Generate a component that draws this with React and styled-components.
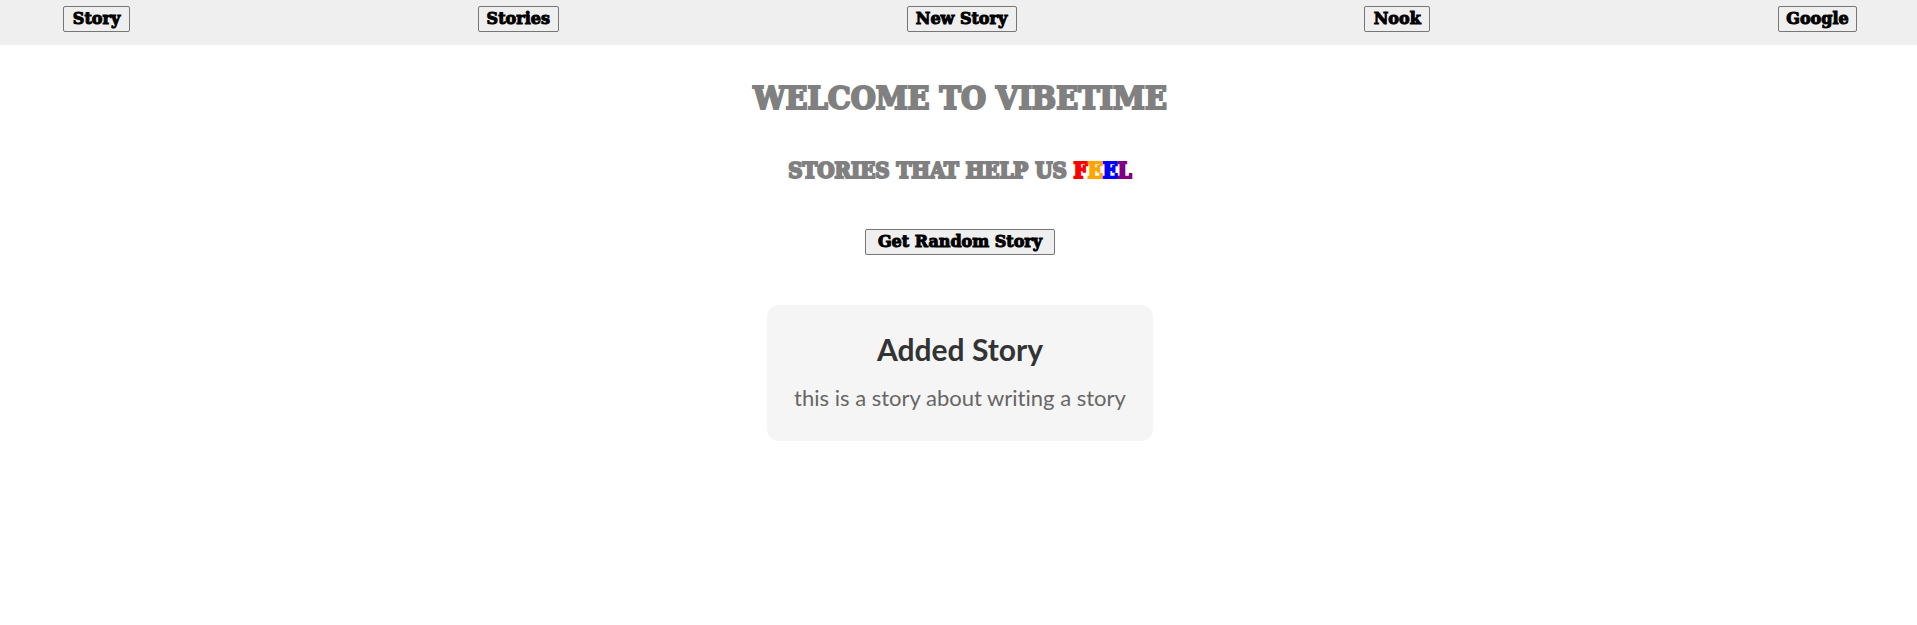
import React from "react";
import styled, { createGlobalStyle } from "styled-components";

const GlobalStyle = createGlobalStyle`
  body { margin: 0; background: #fff; }
`;

const stencil = `"Stencil", "DejaVu Serif Condensed", "DejaVu Serif", serif`;
const broadway = `"Broadway", "DejaVu Serif", serif`;

const Nav = styled.nav`
  display: flex;
  justify-content: space-between;
  align-items: flex-start;
  padding: 6px 60px 13px 63px;
  background: #efefef;
`;

const StoryButton = styled.button`
  box-sizing: border-box;
  min-width: ${(p) => p.$width}px;
  height: 26px;
  padding: 0;
  border: 1px solid #767676;
  border-radius: 2px;
  background: #efefef;
  color: #000;
  font: 900 16px/24px ${broadway};
  -webkit-text-stroke: 1px currentColor;
  white-space: nowrap;
`;

const Main = styled.main`
  display: flex;
  flex-direction: column;
  align-items: center;
  padding: 33px 0 0 3px;
`;

const Title = styled.h1`
  margin: 0 0 36px;
  color: #808080;
  font: bold 32px/40px ${stencil};
  font-stretch: condensed;
  -webkit-text-stroke: 2px currentColor;
`;

const Subtitle = styled.h2`
  margin: 0 0 43px;
  color: #808080;
  font: bold 22px/32px ${stencil};
  font-stretch: condensed;
  -webkit-text-stroke: 2px currentColor;
`;

const Letter = styled.span`
  color: ${(p) => p.$color};
  -webkit-text-stroke-color: ${(p) => p.$color};
`;

const Card = styled.article`
  margin-top: 50px;
  padding: 25px 27px;
  border-radius: 12px;
  background: #f5f5f5;
  text-align: center;
  font-family: Lato, sans-serif;
  font-variant-ligatures: none;
`;

const CardTitle = styled.h2`
  margin: 0;
  color: #333;
  font-size: 30px;
  font-weight: 700;
  line-height: 38px;
`;

const CardText = styled.p`
  margin: 12px 0 0;
  color: #666;
  font-size: 22px;
  line-height: 36px;
`;

const links = [["Story", 67], ["Stories", 81], ["New Story", 110], ["Nook", 66], ["Google", 79]];
const feel = [["F", "red"], ["E", "orange"], ["E", "blue"], ["L", "purple"]];

export default function App() {
  return (
    <>
      <GlobalStyle />
      <Nav>
        {links.map(([label, width]) => <StoryButton key={label} $width={width}>{label}</StoryButton>)}
      </Nav>
      <Main>
        <Title>WELCOME TO VIBETIME</Title>
        <Subtitle>
          STORIES THAT HELP US {feel.map(([l, c], i) => <Letter key={i} $color={c}>{l}</Letter>)}
        </Subtitle>
        <StoryButton $width={190}>Get Random Story</StoryButton>
        <Card>
          <CardTitle>Added Story</CardTitle>
          <CardText>this is a story about writing a story</CardText>
        </Card>
      </Main>
    </>
  );
}
